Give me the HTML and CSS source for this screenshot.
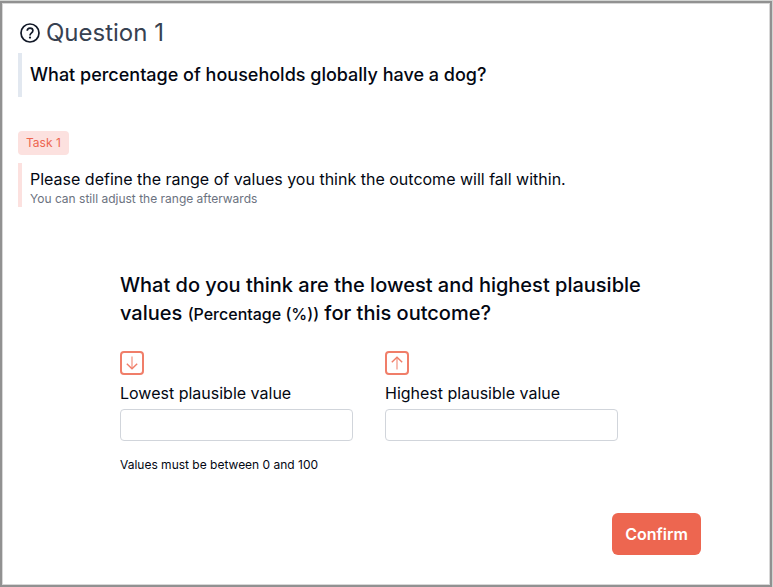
FILE: index.html
```html
<!DOCTYPE html>
<html lang="en">
<head>
<meta charset="utf-8">
<title>Question 1</title>
<link rel="stylesheet" href="styles.css">
</head>
<body>
<main class="panel">
  <h1 class="title">
    <svg class="title-icon" viewBox="0 0 20 20" fill="none" stroke="currentColor" stroke-width="1.700"><circle cx="10" cy="10" r="9"/><path d="M7.200 7.800C7.300 6.100 8.400 5.100 10 5.100c1.700 0 2.900 1 2.900 2.500 0 1.200-.7 1.800-1.600 2.500-.9.700-1.300 1.100-1.300 2.300"/><circle cx="10" cy="14.600" r="1.150" fill="currentColor" stroke="none"/></svg>
    <span>Question 1</span>
  </h1>
  <p class="question">What percentage of households globally have a dog?</p>
  <span class="badge">Task 1</span>
  <div class="task">
    <p class="task-text">Please define the range of values you think the outcome will fall within.</p>
    <p class="task-hint">You can still adjust the range afterwards</p>
  </div>
  <form class="form">
    <h2 class="prompt">What do you think are the lowest and highest plausible<br>values <small>(Percentage (%))</small> for this outcome?</h2>
    <div class="fields">
      <label class="field">
        <svg class="field-icon" viewBox="0 0 24 24" fill="none" stroke="currentColor"><rect x="1" y="1" width="22" height="22" rx="3" stroke-width="2"/><path d="M12 5.500v12" stroke-width="1.700" opacity=".6"/><path d="M6.800 12.700L12 17.800l5.200-5.100" stroke-width="1.400"/></svg>
        <span>Lowest plausible value</span>
        <input type="text">
      </label>
      <label class="field">
        <svg class="field-icon" viewBox="0 0 24 24" fill="none" stroke="currentColor"><rect x="1" y="1" width="22" height="22" rx="3" stroke-width="2"/><path d="M12 18.500v-12" stroke-width="1.700" opacity=".6"/><path d="M6.800 11.300L12 6.200l5.200 5.100" stroke-width="1.400"/></svg>
        <span>Highest plausible value</span>
        <input type="text">
      </label>
    </div>
    <p class="limits">Values must be between 0 and 100</p>
  </form>
  <button class="confirm" type="button">Confirm</button>
</main>
</body>
</html>
```
FILE: styles.css
```css
* { box-sizing: border-box; }
body { margin: 0; padding: 1px 1px 0 0; font-family: Inter, sans-serif; color: #030712; background: #d2d4d2; }
h1, h2, p { margin: 0; font-weight: 400; }
.panel { display: flex; flex-direction: column; align-items: flex-start; height: 586px; padding: 14px 16px 0; border: 2px solid #919191; background: #fff; box-shadow: inset 0 0 0 1px #d8d8d8; }
.title { display: flex; align-items: center; gap: 6px; height: 32px; padding-left: 2px; font-size: 24px; line-height: 32px; color: #374151; }
.title-icon { width: 20px; height: 20px; color: #111827; }
.question { height: 44px; margin-top: 4px; padding-left: 8px; border-left: 4px solid #e2e8f0; font-size: 18px; line-height: 44px; font-weight: 500; }
.badge { height: 24px; margin-top: 34px; padding: 0 8px; border-radius: 4px; background: #fce1df; color: #ed6650; font-size: 12px; line-height: 24px; }
.task { height: 44px; margin-top: 8px; padding: 4px 0 0 8px; border-left: 4px solid #fce1df; }
.task-text { font-size: 16px; line-height: 24px; }
.task-hint { font-size: 12px; line-height: 16px; color: #6b7280; }
.form { margin: 64px 0 0 102px; }
.prompt { font-size: 20px; line-height: 28px; font-weight: 500; }
.prompt small { font-size: 16px; }
.fields { display: flex; gap: 32px; margin-top: 23px; }
.field { display: flex; flex-direction: column; width: 233px; font-size: 16px; line-height: 24px; }
.field-icon { width: 24px; height: 24px; margin-bottom: 6px; color: #f07e69; }
.field input { width: 233px; height: 32px; margin: 4px 0 0; padding: 4px 8px; border: 1px solid #d1d5db; border-radius: 4px; background: #fff; font: inherit; }
.limits { margin-top: 16px; font-size: 12px; line-height: 16px; }
.confirm { align-self: flex-end; width: 89px; height: 42px; margin: 40px 53px 0 0; padding: 0; border: 0; border-radius: 6px; background: #ed6650; color: #fff; font: 600 16px/24px Inter, sans-serif; }
```
